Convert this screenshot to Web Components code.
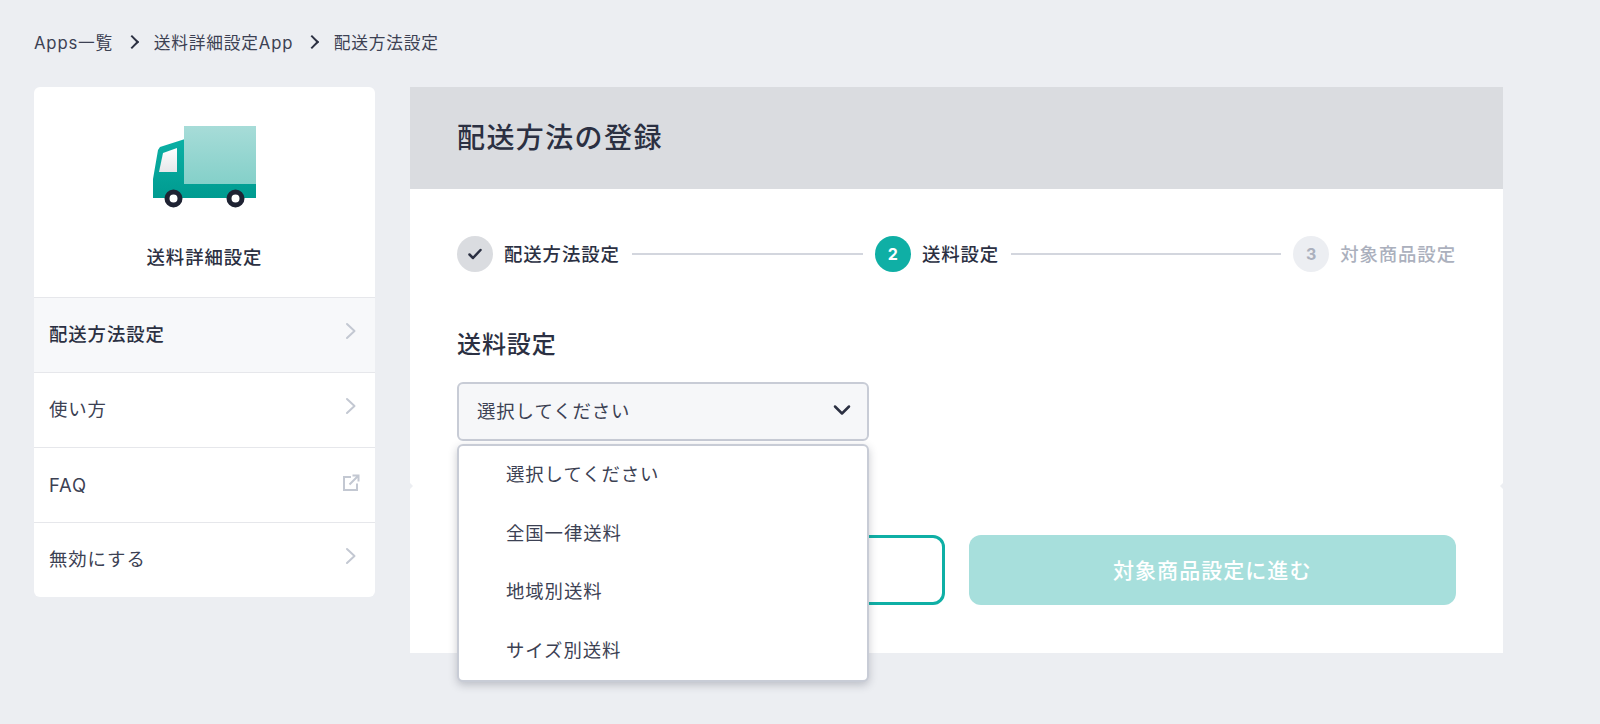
<!DOCTYPE html>
<html lang="ja">
<head>
<meta charset="utf-8">
<title>配送方法設定</title>
<style>
    html, body {
        margin: 0;
        height: 100%;
    }

    body {
        overflow: hidden;
        background: #eceef2;
        color: #2b3042;
        font-family: Inter, "Noto Sans CJK JP", sans-serif;
    }
</style>
</head>
<body>
<app-page>
    <app-breadcrumb slot="crumbs">
        <a>Apps一覧</a>
        <a>送料詳細設定App</a>
        <a>配送方法設定</a>
    </app-breadcrumb>

    <app-sidebar slot="side" title-text="送料詳細設定">
        <app-menu-item active>配送方法設定</app-menu-item>
        <app-menu-item>使い方</app-menu-item>
        <app-menu-item external>FAQ</app-menu-item>
        <app-menu-item>無効にする</app-menu-item>
    </app-sidebar>

    <app-panel slot="main" heading="配送方法の登録">
        <app-stepper>
            <app-step state="done">配送方法設定</app-step>
            <app-step state="current" number="2" line="231">送料設定</app-step>
            <app-step state="todo" number="3" line="270">対象商品設定</app-step>
        </app-stepper>

        <app-select label="送料設定" value="選択してください">
            <span>選択してください</span>
            <span>全国一律送料</span>
            <span>地域別送料</span>
            <span>サイズ別送料</span>
        </app-select>

        <app-actions slot="footer" next="対象商品設定に進む"></app-actions>
    </app-panel>
</app-page>

<script>
const CHEVRON_RIGHT = '<svg width="14" height="18" viewBox="0 0 14 18" fill="none" stroke="currentColor" stroke-width="2" stroke-linecap="round" stroke-linejoin="round"><path d="M3 2l7.500 7L3 16"/></svg>';
const EXTERNAL = '<svg width="18" height="18" viewBox="0 0 18 18" fill="none" stroke="currentColor" stroke-width="2"><path d="M9 3H2v13h13V9.500"/><path d="M7.500 10.500L16 2M10.500 1.500h6v6"/></svg>';

class AppPage extends HTMLElement {
    constructor() {
        super();
        this.attachShadow({ mode: 'open' });
        this.shadowRoot.innerHTML = `
      <style>
        :host {
          display: block;
          padding: 28px 0 0 34px;
        }

        .columns {
          display: flex;
          align-items: flex-start;
          gap: 35px;
          margin-top: 32px;
        }
      </style>

      <slot name="crumbs"></slot>
      <div class="columns">
        <slot name="side"></slot>
        <slot name="main"></slot>
      </div>
    `;
    }
}

class AppBreadcrumb extends HTMLElement {
    constructor() {
        super();
        this.attachShadow({ mode: 'open' });
        this.shadowRoot.innerHTML = `
      <style>
        :host {
          display: flex;
          align-items: center;
          height: 27px;
          font-size: 16.700px;
          letter-spacing: 0.05em;
          color: #3c4153;
        }

        ::slotted(a) {
          display: flex;
          align-items: center;
        }

        ::slotted(a:not(:last-child))::after {
          content: "";
          width: 8px;
          height: 8px;
          margin: 0 16.500px 0 14px;
          border-top: 2.500px solid #2b3042;
          border-right: 2.500px solid #2b3042;
          transform: rotate(45deg);
        }
      </style>

      <slot></slot>
    `;
    }
}

class AppSidebar extends HTMLElement {
    constructor() {
        super();
        this.attachShadow({ mode: 'open' });
        this.shadowRoot.innerHTML = `
      <style>
        :host {
          display: block;
          flex: none;
          width: 341px;
          overflow: hidden;
          background: #fff;
          border-radius: 6px;
        }

        .head {
          display: flex;
          flex-direction: column;
          align-items: center;
          height: 210px;
          box-sizing: border-box;
          padding-top: 39px;
        }

        svg {
          display: block;
        }

        .title {
          margin-top: 36px;
          font-size: 18.400px;
          font-weight: 500;
          line-height: 27px;
          letter-spacing: 0.05em;
          color: #2b3042;
        }
      </style>

      <div class="head">
        <svg width="103" height="82" viewBox="0 0 103 82">
          <defs>
            <linearGradient id="box" x1="0" y1="0" x2="0" y2="1">
              <stop offset="0" stop-color="#a7dcd8"/>
              <stop offset="1" stop-color="#84d0c9"/>
            </linearGradient>
            <linearGradient id="cab" x1="0" y1="0" x2="0" y2="1">
              <stop offset="0" stop-color="#0bb0a5"/>
              <stop offset="1" stop-color="#009b90"/>
            </linearGradient>
            <linearGradient id="glass" x1="0" y1="0" x2="0" y2="1">
              <stop offset="0" stop-color="#fff"/>
              <stop offset="1" stop-color="#e6e7ea"/>
            </linearGradient>
          </defs>
          <path d="M32 13L7 21 5 24 0 53v19h103V57H32z" fill="url(#cab)"/>
          <rect x="31" y="0" width="72" height="58" fill="url(#box)"/>
          <path d="M24 22v24H6l4-19z" fill="url(#glass)"/>
          <circle cx="20.500" cy="72.500" r="6.500" fill="#fff" stroke="#1f2333" stroke-width="5"/>
          <circle cx="82.500" cy="72.500" r="6.500" fill="#fff" stroke="#1f2333" stroke-width="5"/>
        </svg>
        <div class="title"></div>
      </div>
      <slot></slot>
    `;
        this.shadowRoot.querySelector('.title').textContent = this.getAttribute('title-text');
    }
}

class AppMenuItem extends HTMLElement {
    constructor() {
        super();
        this.attachShadow({ mode: 'open' });
        this.shadowRoot.innerHTML = `
      <style>
        :host {
          display: flex;
          align-items: center;
          justify-content: space-between;
          box-sizing: border-box;
          height: 75px;
          padding: 0 15px 5px;
          border-top: 1px solid #e6e7eb;
          font-size: 18.400px;
          letter-spacing: 0.05em;
          color: #3c4153;
        }

        :host([active]) {
          background: #f7f8fa;
          font-weight: 500;
          color: #2b3042;
        }

        :host([external]) {
          padding-bottom: 1px;
        }

        .icon {
          display: flex;
          justify-content: center;
          width: 18px;
          margin-top: -3px;
          color: #c3c8d2;
        }

        :host([external]) .icon {
          margin-top: -4px;
        }
      </style>

      <slot></slot>
      <span class="icon"></span>
    `;
        this.shadowRoot.querySelector('.icon').innerHTML = this.hasAttribute('external') ? EXTERNAL : CHEVRON_RIGHT;
    }
}

class AppPanel extends HTMLElement {
    constructor() {
        super();
        this.attachShadow({ mode: 'open' });
        this.shadowRoot.innerHTML = `
      <style>
        :host {
          display: block;
          flex: none;
          position: relative;
          width: 1093px;
          background: #fff;
        }

        .head {
          display: flex;
          align-items: center;
          box-sizing: border-box;
          height: 102px;
          padding: 0 0 5px 47px;
          background: #dadce0;
          font-size: 28px;
          font-weight: 500;
          letter-spacing: 0.05em;
          color: #2b3042;
        }

        .body {
          box-sizing: border-box;
          height: 297px;
          padding: 47px 47px 0;
        }

        .foot {
          box-sizing: border-box;
          height: 167px;
          padding: 49px 47px 0;
        }

        /* small bites out of the card edge where the two sections meet */
        .notch {
          position: absolute;
          top: 396px;
          width: 0;
          height: 0;
          border-top: 3px solid transparent;
          border-bottom: 3px solid transparent;
        }

        .notch.left {
          left: 0;
          border-left: 3px solid #eceef2;
        }

        .notch.right {
          right: 0;
          border-right: 3px solid #eceef2;
        }
      </style>

      <div class="head"></div>
      <div class="body"><slot></slot></div>
      <div class="foot"><slot name="footer"></slot></div>
      <i class="notch left"></i>
      <i class="notch right"></i>
    `;
        this.shadowRoot.querySelector('.head').textContent = this.getAttribute('heading');
    }
}

class AppStepper extends HTMLElement {
    constructor() {
        super();
        this.attachShadow({ mode: 'open' });
        this.shadowRoot.innerHTML = `
      <style>
        :host {
          display: flex;
          align-items: center;
          height: 36px;
        }
      </style>

      <slot></slot>
    `;
    }
}

class AppStep extends HTMLElement {
    constructor() {
        super();
        this.attachShadow({ mode: 'open' });
        this.shadowRoot.innerHTML = `
      <style>
        :host {
          display: flex;
          flex: none;
          align-items: center;
          gap: 11px;
          font-size: 18.400px;
          font-weight: 500;
          letter-spacing: 0.05em;
          color: #2b3042;
        }

        .line {
          height: 2px;
          margin-left: 12px;
          margin-right: 1px;
          background: #d3d6de;
        }

        .dot {
          display: flex;
          align-items: center;
          justify-content: center;
          flex: none;
          width: 36px;
          height: 36px;
          border-radius: 50%;
          font-family: Inter, sans-serif;
          font-size: 16px;
          font-weight: 700;
          letter-spacing: 0;
          color: #fff;
          background: #dadce0;
        }

        :host([state="current"]) .dot {
          background: #0fafa5;
        }

        :host([state="todo"]) {
          color: #abb0bd;
        }

        :host([state="todo"]) .dot {
          background: #eceef2;
          color: #abb0bd;
        }

        .text {
          flex: none;
          padding-bottom: 2px;
          white-space: nowrap;
        }
      </style>

      <div class="line"></div>
      <div class="dot"></div>
      <div class="text"><slot></slot></div>
    `;
        const line = this.shadowRoot.querySelector('.line');
        const dot = this.shadowRoot.querySelector('.dot');

        if (this.hasAttribute('line')) {
            line.style.width = `${this.getAttribute('line')}px`;
        } else {
            line.remove();
        }

        if (this.getAttribute('state') === 'done') {
            dot.innerHTML = '<svg width="16" height="14" viewBox="0 0 16 14" fill="none" stroke="#2b3042" stroke-width="2.500" stroke-linecap="round" stroke-linejoin="round"><path d="M2.500 7.500l3.500 3.500 7.500-8"/></svg>';
        } else {
            dot.textContent = this.getAttribute('number');
        }
    }
}

class AppSelect extends HTMLElement {
    constructor() {
        super();
        this.attachShadow({ mode: 'open' });
        this.shadowRoot.innerHTML = `
      <style>
        :host {
          display: block;
          position: relative;
          margin-top: 55px;
          font-size: 18.400px;
          letter-spacing: 0.05em;
          color: #3c4153;
        }

        .label {
          font-size: 24px;
          font-weight: 500;
          line-height: 36px;
          color: #2b3042;
        }

        .control {
          display: flex;
          align-items: center;
          justify-content: space-between;
          box-sizing: border-box;
          width: 412px;
          height: 59px;
          margin-top: 19px;
          padding: 0 15px 3px 18px;
          background: #f6f7f9;
          border: 2px solid #c8ccd6;
          border-radius: 6px;
        }

        svg {
          display: block;
        }

        .menu {
          position: absolute;
          z-index: 2;
          top: 117px;
          left: 0;
          box-sizing: border-box;
          width: 412px;
          background: #fff;
          border: 2px solid #c8ccd6;
          border-radius: 6px;
          box-shadow: 0 3px 8px rgba(43, 48, 66, 0.25);
        }

        ::slotted(span) {
          display: flex;
          align-items: center;
          box-sizing: border-box;
          height: 58.500px;
          padding: 0 0 4px 47px;
        }
      </style>

      <div class="label"></div>
      <div class="control">
        <span class="value"></span>
        <svg width="20" height="14" viewBox="0 0 20 14" fill="none" stroke="#2b3042" stroke-width="2.500" stroke-linecap="round" stroke-linejoin="round"><path d="M3 3.500l7 7 7-7"/></svg>
      </div>
      <div class="menu"><slot></slot></div>
    `;
        this.shadowRoot.querySelector('.label').textContent = this.getAttribute('label');
        this.shadowRoot.querySelector('.value').textContent = this.getAttribute('value');
    }
}

class AppActions extends HTMLElement {
    constructor() {
        super();
        this.attachShadow({ mode: 'open' });
        this.shadowRoot.innerHTML = `
      <style>
        :host {
          display: grid;
          grid-template-columns: 1fr 1fr;
          gap: 24px;
        }

        .btn {
          display: flex;
          align-items: center;
          justify-content: center;
          box-sizing: border-box;
          height: 70px;
          padding-bottom: 3px;
          border-radius: 12px;
          font-size: 21px;
          font-weight: 500;
          letter-spacing: 0.05em;
          color: #fff;
        }

        .back {
          background: #fff;
          border: 3px solid #0fafa5;
        }

        .next {
          background: #a7dfdc;
        }
      </style>

      <div class="btn back"></div>
      <div class="btn next"></div>
    `;
        this.shadowRoot.querySelector('.next').textContent = this.getAttribute('next');
    }
}

customElements.define('app-page', AppPage);
customElements.define('app-breadcrumb', AppBreadcrumb);
customElements.define('app-sidebar', AppSidebar);
customElements.define('app-menu-item', AppMenuItem);
customElements.define('app-panel', AppPanel);
customElements.define('app-stepper', AppStepper);
customElements.define('app-step', AppStep);
customElements.define('app-select', AppSelect);
customElements.define('app-actions', AppActions);
</script>
</body>
</html>
